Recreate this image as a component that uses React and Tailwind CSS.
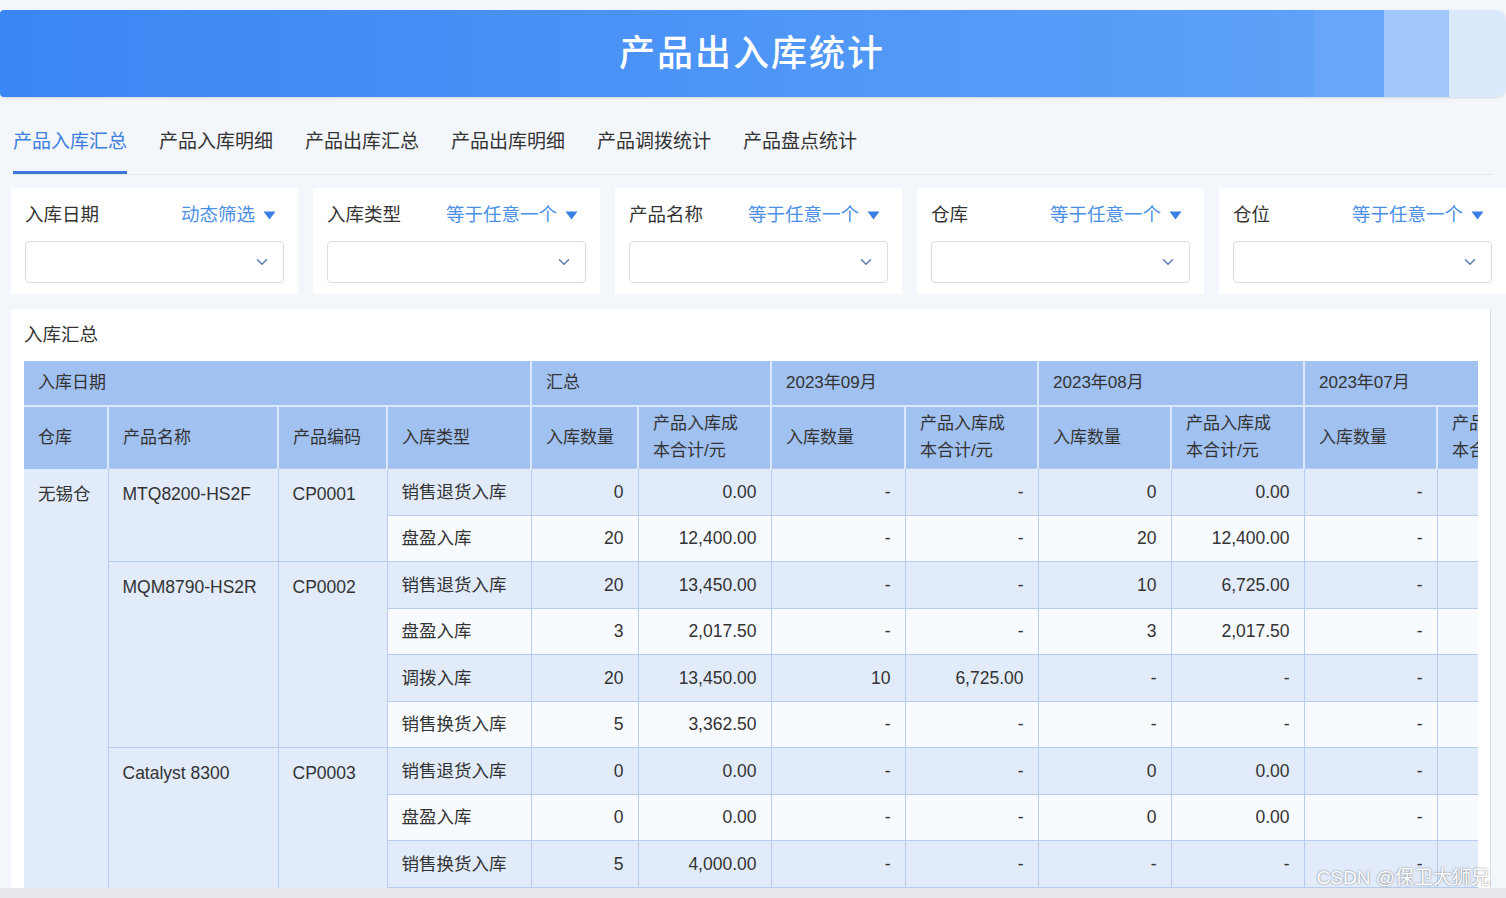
import { ChevronDown } from 'lucide-react';

const FONT = { fontFamily: '"Liberation Sans", "Noto Sans CJK SC", sans-serif' };

const tabs = ['产品入库汇总', '产品入库明细', '产品出库汇总', '产品出库明细', '产品调拨统计', '产品盘点统计'];

const filters = [
  { label: '入库日期', op: '动态筛选' },
  { label: '入库类型', op: '等于任意一个' },
  { label: '产品名称', op: '等于任意一个' },
  { label: '仓库', op: '等于任意一个' },
  { label: '仓位', op: '等于任意一个' },
];

// each product group: name, code, rows of [type, ...8 values]
const groups = [
  {
    name: 'MTQ8200-HS2F',
    code: 'CP0001',
    rows: [
      ['销售退货入库', '0', '0.00', '-', '-', '0', '0.00', '-', ''],
      ['盘盈入库', '20', '12,400.00', '-', '-', '20', '12,400.00', '-', ''],
    ],
  },
  {
    name: 'MQM8790-HS2R',
    code: 'CP0002',
    rows: [
      ['销售退货入库', '20', '13,450.00', '-', '-', '10', '6,725.00', '-', ''],
      ['盘盈入库', '3', '2,017.50', '-', '-', '3', '2,017.50', '-', ''],
      ['调拨入库', '20', '13,450.00', '10', '6,725.00', '-', '-', '-', ''],
      ['销售换货入库', '5', '3,362.50', '-', '-', '-', '-', '-', ''],
    ],
  },
  {
    name: 'Catalyst 8300',
    code: 'CP0003',
    rows: [
      ['销售退货入库', '0', '0.00', '-', '-', '0', '0.00', '-', ''],
      ['盘盈入库', '0', '0.00', '-', '-', '0', '0.00', '-', ''],
      ['销售换货入库', '5', '4,000.00', '-', '-', '-', '-', '-', ''],
      ['', '', '', '', '', '', '', '', ''],
    ],
  },
];

const colWidths = [84, 170, 109, 144, 107, 133, 134, 133, 133, 133, 133, 133];

function Caret() {
  return (
    <svg width="13" height="9" viewBox="0 0 13 9" className="ml-2">
      <path d="M0.5 0.5 H12.5 L6.5 8.5 Z" fill="#3a7fe3" />
    </svg>
  );
}

function FilterCard({ label, op }) {
  return (
    <div className="flex-1 bg-white px-[14px] pt-[14px] pb-[11px]">
      <div className="flex items-center justify-between pr-[8px] h-[27px]">
        <span className="text-[18.5px] text-[#333]">{label}</span>
        <span className="flex items-center text-[18.5px] text-[#4b8fe6]">
          {op}
          <Caret />
        </span>
      </div>
      <div className="mt-[12px] h-[42px] rounded-[4px] border border-[#d9dde3] bg-white flex items-center justify-end pr-[12px]">
        <ChevronDown className="w-[18px] h-[18px] text-[#5a7db3]" strokeWidth={2} />
      </div>
    </div>
  );
}

export default function App() {
  let rowIndex = 0;
  return (
    <div className="relative w-[1506px] h-[898px] overflow-hidden bg-[#f3f6fa]" style={FONT}>
      {/* banner */}
      <div className="pt-[10px]">
        <div className="h-[87px] flex rounded-r-[10px] rounded-l-[4px] overflow-hidden shadow-sm">
          <div className="flex-1 bg-gradient-to-r from-[#3a86f4] via-[#4b93f6] to-[#5da1f8] flex items-center justify-center">
            <h1 className="text-[36px] font-medium tracking-[2px] text-white pl-[190px]">产品出入库统计</h1>
          </div>
          <div className="w-[70px] bg-[#67a6f9]" />
          <div className="w-[65px] bg-[#a2c7fb]" />
          <div className="w-[57px] bg-[#dbe9fd]" />
        </div>
      </div>

      {/* tabs */}
      <div className="mt-[27px] mx-[13px] flex gap-[32px] border-b border-[#e4e8ee]">
        {tabs.map((t, i) => (
          <div
            key={t}
            className={
              i === 0
                ? 'pb-[14px] pt-[4px] text-[19px] text-[#3b7fe0] border-b-[3px] border-[#3b78d8]'
                : 'pb-[14px] pt-[4px] text-[19px] text-[#333] border-b-[3px] border-transparent'
            }
          >
            {t}
          </div>
        ))}
      </div>

      {/* filters */}
      <div className="mt-[13px] ml-[11px] flex gap-[15px]">
        {filters.map((f) => (
          <FilterCard key={f.label} {...f} />
        ))}
      </div>

      {/* summary section */}
      <div className="mt-[15px] ml-[11px] bg-white h-[600px] pl-[13px] pt-[12px] border-r border-[#d8dde4] mr-[15px]">
        <div className="text-[18.5px] text-[#333] h-[28px] leading-[28px]">入库汇总</div>
        <div className="mt-[12px] w-[1454px] overflow-hidden">
          <table className="table-fixed border-collapse text-[17.5px] text-[#333]" style={{ width: 1546 }}>
            <colgroup>
              {colWidths.map((w, i) => (
                <col key={i} style={{ width: w }} />
              ))}
            </colgroup>
            <thead>
              <tr className="h-[45px] bg-[#a1c1f0] text-[17px]">
                <th colSpan={4} className="text-left font-normal pl-[14px] border-r-2 border-[#dbe7fa]">入库日期</th>
                <th colSpan={2} className="text-left font-normal pl-[14px] border-r-2 border-[#dbe7fa]">汇总</th>
                <th colSpan={2} className="text-left font-normal pl-[14px] border-r-2 border-[#dbe7fa]">2023年09月</th>
                <th colSpan={2} className="text-left font-normal pl-[14px] border-r-2 border-[#dbe7fa]">2023年08月</th>
                <th colSpan={2} className="text-left font-normal pl-[14px]">2023年07月</th>
              </tr>
              <tr className="h-[63px] bg-[#a1c1f0] text-[17px] border-t-2 border-[#dbe7fa]">
                {['仓库', '产品名称', '产品编码', '入库类型'].map((h) => (
                  <th key={h} className="text-left font-normal pl-[14px] border-r-2 border-[#dbe7fa]">{h}</th>
                ))}
                {[0, 1, 2, 3].map((k) => [
                  <th key={'q' + k} className="text-left font-normal pl-[14px] border-r-2 border-[#dbe7fa]">入库数量</th>,
                  <th key={'c' + k} className="text-left font-normal pl-[14px] leading-[27px] border-r-2 border-[#dbe7fa]">
                    产品入库成<br />本合计/元
                  </th>,
                ])}
              </tr>
            </thead>
            <tbody>
              {groups.map((g, gi) =>
                g.rows.map((r, ri) => {
                  const striped = rowIndex % 2 === 0;
                  rowIndex += 1;
                  const bg = striped ? 'bg-[#e1ebfa]' : 'bg-[#f7faff]';
                  return (
                    <tr key={gi + '-' + ri} className="h-[46.5px]">
                      {gi === 0 && ri === 0 && (
                        <td rowSpan={20} className="align-top pt-[12px] pl-[14px] bg-[#e1ebfa] border-r border-[#b8cdee]">无锡仓</td>
                      )}
                      {ri === 0 && (
                        <>
                          <td rowSpan={g.rows.length} className="align-top pt-[12px] pl-[14px] bg-[#e1ebfa] border border-[#b8cdee]">{g.name}</td>
                          <td rowSpan={g.rows.length} className="align-top pt-[12px] pl-[14px] bg-[#e1ebfa] border border-[#b8cdee]">{g.code}</td>
                        </>
                      )}
                      <td className={`${bg} pl-[14px] border border-[#b8cdee]`}>{r[0]}</td>
                      {r.slice(1).map((v, vi) => (
                        <td key={vi} className={`${bg} text-right pr-[14px] border border-[#b8cdee]`}>{v}</td>
                      ))}
                    </tr>
                  );
                })
              )}
            </tbody>
          </table>
        </div>
      </div>

      {/* bottom frame strip */}
      <div className="absolute left-0 right-0 bottom-0 h-[10px] bg-[#e6e8eb]" />

      {/* watermark */}
      <div
        className="absolute right-[16px] bottom-[6px] text-[19px] text-white"
        style={{ textShadow: '0 0 2px rgba(0,0,0,0.55)' }}
      >
        CSDN @保卫大狮兄
      </div>
    </div>
  );
}
